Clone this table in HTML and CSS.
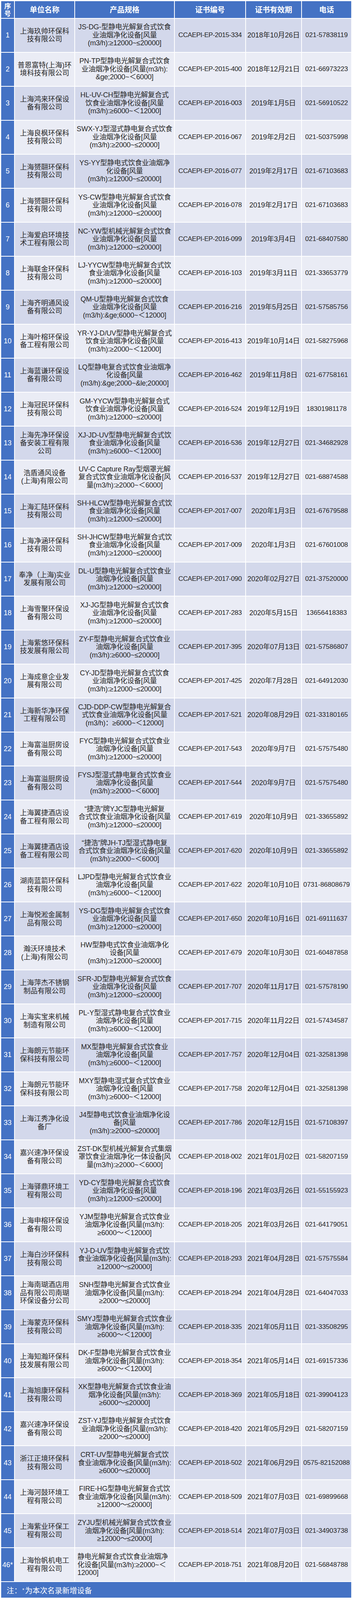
FILE: index.html
```html
<!DOCTYPE html>
<html lang="zh-CN">
<head>
<meta charset="utf-8">
<title>饮食业油烟净化设备名录</title>
<link rel="stylesheet" href="styles.css">
</head>
<body>
<div class="sheet">
<div class="row head"><div class="cell no">序<br>号</div><div class="cell">单位名称</div><div class="cell">产品规格</div><div class="cell">证书编号</div><div class="cell">证书有效期</div><div class="cell">电话</div></div>
<div class="row"><div class="cell no">1</div><div class="cell">上海玖帅环保科<br>技有限公司</div><div class="cell prod">JS-DG-型静电光解复合式饮食<br>业油烟净化设备[风量<br>(m3/h):≥12000~≤20000]</div><div class="cell cert">CCAEPI-EP-2015-334</div><div class="cell date">2018年10月26日</div><div class="cell tel">021-57838119</div></div>
<div class="row"><div class="cell no">2</div><div class="cell">普恩富特(上海)环<br>境科技有限公司</div><div class="cell prod">PN-TP型静电光解复合式饮食<br>业油烟净化设备[风量(m3/h):<br>&amp;ge;2000~＜6000]</div><div class="cell cert">CCAEPI-EP-2015-400</div><div class="cell date">2018年12月21日</div><div class="cell tel">021-66973223</div></div>
<div class="row"><div class="cell no">3</div><div class="cell">上海鸿来环保设<br>备有限公司</div><div class="cell prod">HL-UV-CH型静电光解复合式<br>饮食业油烟净化设备[风量<br>(m3/h):≥6000~＜12000]</div><div class="cell cert">CCAEPI-EP-2016-003</div><div class="cell date">2019年1月5日</div><div class="cell tel">021-56910522</div></div>
<div class="row"><div class="cell no">4</div><div class="cell">上海良枫环保科<br>技有限公司</div><div class="cell prod">SWX-YJ型湿式静电复合式饮食<br>业油烟净化设备[风量<br>(m3/h):≥2000~≤20000]</div><div class="cell cert">CCAEPI-EP-2016-067</div><div class="cell date">2019年2月2日</div><div class="cell tel">021-50375998</div></div>
<div class="row"><div class="cell no">5</div><div class="cell">上海赟翮环保科<br>技有限公司</div><div class="cell prod">YS-YY型静电式饮食业油烟净<br>化设备[风量<br>(m3/h):≥12000~≤20000]</div><div class="cell cert">CCAEPI-EP-2016-077</div><div class="cell date">2019年2月17日</div><div class="cell tel">021-67103683</div></div>
<div class="row"><div class="cell no">6</div><div class="cell">上海赟翮环保科<br>技有限公司</div><div class="cell prod">YS-CW型静电光解复合式饮食<br>业油烟净化设备[风量<br>(m3/h):≥12000~≤20000]</div><div class="cell cert">CCAEPI-EP-2016-078</div><div class="cell date">2019年2月17日</div><div class="cell tel">021-67103683</div></div>
<div class="row"><div class="cell no">7</div><div class="cell">上海爱启环境技<br>术工程有限公司</div><div class="cell prod">NC-YW型机械光解复合式饮食<br>业油烟净化设备[风量<br>(m3/h):≥12000~≤20000]</div><div class="cell cert">CCAEPI-EP-2016-099</div><div class="cell date">2019年3月4日</div><div class="cell tel">021-68407580</div></div>
<div class="row"><div class="cell no">8</div><div class="cell">上海联金环保科<br>技有限公司</div><div class="cell prod">LJ-YYCW型静电光解复合式饮<br>食业油烟净化设备[风量<br>(m3/h):≥12000~≤20000]</div><div class="cell cert">CCAEPI-EP-2016-103</div><div class="cell date">2019年3月11日</div><div class="cell tel">021-33653779</div></div>
<div class="row"><div class="cell no">9</div><div class="cell">上海齐明通风设<br>备有限公司</div><div class="cell prod">QM-U型静电光解复合式饮食<br>业油烟净化设备[风量<br>(m3/h):&amp;ge;6000~＜12000]</div><div class="cell cert">CCAEPI-EP-2016-216</div><div class="cell date">2019年5月25日</div><div class="cell tel">021-57585756</div></div>
<div class="row"><div class="cell no">10</div><div class="cell">上海叶榕环保设<br>备工程有限公司</div><div class="cell prod">YR-YJ-D/UV型静电光解复合式<br>饮食业油烟净化设备[风量<br>(m3/h):≥2000~＜12000]</div><div class="cell cert">CCAEPI-EP-2016-413</div><div class="cell date">2019年10月14日</div><div class="cell tel">021-58275968</div></div>
<div class="row"><div class="cell no">11</div><div class="cell">上海蓝谦环保设<br>备有限公司</div><div class="cell prod">LQ型静电复合式饮食业油烟净<br>化设备[风量<br>(m3/h):&amp;ge;2000~&amp;le;20000]</div><div class="cell cert">CCAEPI-EP-2016-462</div><div class="cell date">2019年11月8日</div><div class="cell tel">021-67758161</div></div>
<div class="row"><div class="cell no">12</div><div class="cell">上海冠民环保科<br>技有限公司</div><div class="cell prod">GM-YYCW型静电光解复合式<br>饮食业油烟净化设备[风量<br>(m3/h):≥12000~≤20000]</div><div class="cell cert">CCAEPI-EP-2016-524</div><div class="cell date">2019年12月19日</div><div class="cell tel">18301981178</div></div>
<div class="row"><div class="cell no">13</div><div class="cell">上海先净环保设<br>备安装工程有限<br>公司</div><div class="cell prod">XJ-JD-UV型静电光解复合式饮<br>食业油烟净化设备[风量<br>(m3/h):≥6000~＜12000]</div><div class="cell cert">CCAEPI-EP-2016-536</div><div class="cell date">2019年12月27日</div><div class="cell tel">021-34682928</div></div>
<div class="row"><div class="cell no">14</div><div class="cell">浩盾通风设备<br>(上海)有限公司</div><div class="cell prod">UV-C Capture Ray型烟罩光解<br>复合式饮食业油烟净化设备[风<br>量(m3/h):≥2000~＜6000]</div><div class="cell cert">CCAEPI-EP-2016-537</div><div class="cell date">2019年12月27日</div><div class="cell tel">021-68874588</div></div>
<div class="row"><div class="cell no">15</div><div class="cell">上海汇陆环保科<br>技有限公司</div><div class="cell prod">SH-HLCW型静电光解复合式饮<br>食业油烟净化设备[风量<br>(m3/h):≥12000~≤20000]</div><div class="cell cert">CCAEPI-EP-2017-007</div><div class="cell date">2020年1月3日</div><div class="cell tel">021-67679588</div></div>
<div class="row"><div class="cell no">16</div><div class="cell">上海净涵环保科<br>技有限公司</div><div class="cell prod">SH-JHCW型静电光解复合式饮<br>食业油烟净化设备[风量<br>(m3/h):≥12000~≤20000]</div><div class="cell cert">CCAEPI-EP-2017-009</div><div class="cell date">2020年1月3日</div><div class="cell tel">021-67601008</div></div>
<div class="row"><div class="cell no">17</div><div class="cell">奉净（上海)实业<br>发展有限公司</div><div class="cell prod">DL-U型静电光解复合式饮食业<br>油烟净化设备[风量<br>(m3/h):≥12000~≤20000]</div><div class="cell cert">CCAEPI-EP-2017-090</div><div class="cell date">2020年02月27日</div><div class="cell tel">021-37520000</div></div>
<div class="row"><div class="cell no">18</div><div class="cell">上海雪聚环保设<br>备有限公司</div><div class="cell prod">XJ-JG型静电光解复合式饮食<br>业油烟净化设备[风量<br>(m3/h):≥12000~≤20000]</div><div class="cell cert">CCAEPI-EP-2017-283</div><div class="cell date">2020年5月15日</div><div class="cell tel">13656418383</div></div>
<div class="row"><div class="cell no">19</div><div class="cell">上海紫悠环保科<br>技发展有限公司</div><div class="cell prod">ZY-F型静电光解复合式饮食业<br>油烟净化设备[风量<br>(m3/h):≥6000~≤20000]</div><div class="cell cert">CCAEPI-EP-2017-395</div><div class="cell date">2020年07月13日</div><div class="cell tel">021-57586807</div></div>
<div class="row"><div class="cell no">20</div><div class="cell">上海成意企业发<br>展有限公司</div><div class="cell prod">CY-JD型静电光解复合式饮食<br>业油烟净化设备[风量<br>(m3/h):≥12000~≤20000]</div><div class="cell cert">CCAEPI-EP-2017-425</div><div class="cell date">2020年7月28日</div><div class="cell tel">021-64912030</div></div>
<div class="row"><div class="cell no">21</div><div class="cell">上海新华净环保<br>工程有限公司</div><div class="cell prod">CJD-DDP-CW型静电光解复合<br>式饮食业油烟净化设备[风量<br>(m3/h)：≥6000~＜12000]</div><div class="cell cert">CCAEPI-EP-2017-521</div><div class="cell date">2020年08月29日</div><div class="cell tel">021-33180165</div></div>
<div class="row"><div class="cell no">22</div><div class="cell">上海富溢厨房设<br>备有限公司</div><div class="cell prod">FYC型静电光解复合式饮食业<br>油烟净化设备[风量<br>(m3/h):≥12000~≤20000]</div><div class="cell cert">CCAEPI-EP-2017-543</div><div class="cell date">2020年9月7日</div><div class="cell tel">021-57575480</div></div>
<div class="row"><div class="cell no">23</div><div class="cell">上海富溢厨房设<br>备有限公司</div><div class="cell prod">FYSJ型湿式静电复合式饮食业<br>油烟净化设备[风量<br>(m3/h):≥2000~＜6000]</div><div class="cell cert">CCAEPI-EP-2017-544</div><div class="cell date">2020年9月7日</div><div class="cell tel">021-57575480</div></div>
<div class="row"><div class="cell no">24</div><div class="cell">上海翼捷酒店设<br>备工程有限公司</div><div class="cell prod">“捷浩”牌YJC型静电光解复<br>合式饮食业油烟净化设备[风量<br>(m3/h):≥12000~≤20000]</div><div class="cell cert">CCAEPI-EP-2017-619</div><div class="cell date">2020年10月9日</div><div class="cell tel">021-33655892</div></div>
<div class="row"><div class="cell no">25</div><div class="cell">上海翼捷酒店设<br>备工程有限公司</div><div class="cell prod">“捷浩”牌JH-TJ型湿式静电复<br>合式饮食业油烟净化设备[风量<br>(m3/h):≥2000~＜6000]</div><div class="cell cert">CCAEPI-EP-2017-620</div><div class="cell date">2020年10月9日</div><div class="cell tel">021-33655892</div></div>
<div class="row"><div class="cell no">26</div><div class="cell">湖南蓝箭环保科<br>技有限公司</div><div class="cell prod">LJPD型静电光解复合式饮食业<br>油烟净化设备[风量<br>(m3/h):≥6000~＜12000]</div><div class="cell cert">CCAEPI-EP-2017-622</div><div class="cell date">2020年10月10日</div><div class="cell tel">0731-86808679</div></div>
<div class="row"><div class="cell no">27</div><div class="cell">上海悦淞金属制<br>品有限公司</div><div class="cell prod">YS-DG型静电光解复合式饮食<br>业油烟净化设备[风量<br>(m3/h):≥12000~≤20000]</div><div class="cell cert">CCAEPI-EP-2017-650</div><div class="cell date">2020年10月16日</div><div class="cell tel">021-69111637</div></div>
<div class="row"><div class="cell no">28</div><div class="cell">瀚沃环境技术<br>(上海)有限公司</div><div class="cell prod">HW型静电式饮食业油烟净化<br>设备[风量<br>(m3/h):≥12000~≤20000]</div><div class="cell cert">CCAEPI-EP-2017-679</div><div class="cell date">2020年10月30日</div><div class="cell tel">021-60487858</div></div>
<div class="row"><div class="cell no">29</div><div class="cell">上海萍杰不锈钢<br>制品有限公司</div><div class="cell prod">SFR-JD型静电光解复合式饮食<br>业油烟净化设备[风量<br>(m3/h):≥12000~≤20000]</div><div class="cell cert">CCAEPI-EP-2017-707</div><div class="cell date">2020年11月17日</div><div class="cell tel">021-57578190</div></div>
<div class="row"><div class="cell no">30</div><div class="cell">上海实宝来机械<br>制造有限公司</div><div class="cell prod">PL-Y型湿式静电复合式饮食业<br>油烟净化设备[风量<br>(m3/h):≥6000~＜12000]</div><div class="cell cert">CCAEPI-EP-2017-715</div><div class="cell date">2020年11月22日</div><div class="cell tel">021-57434587</div></div>
<div class="row"><div class="cell no">31</div><div class="cell">上海朗元节能环<br>保科技有限公司</div><div class="cell prod">MX型静电光解复合式饮食业<br>油烟净化设备[风量<br>(m3/h):≥6000~＜12000]</div><div class="cell cert">CCAEPI-EP-2017-757</div><div class="cell date">2020年12月04日</div><div class="cell tel">021-32581398</div></div>
<div class="row"><div class="cell no">32</div><div class="cell">上海朗元节能环<br>保科技有限公司</div><div class="cell prod">MXY型静电湿式复合式饮食业<br>油烟净化设备[风量<br>(m3/h):≥6000~＜12000]</div><div class="cell cert">CCAEPI-EP-2017-758</div><div class="cell date">2020年12月04日</div><div class="cell tel">021-32581398</div></div>
<div class="row"><div class="cell no">33</div><div class="cell">上海江秀净化设<br>备厂</div><div class="cell prod">J4型静电式饮食业油烟净化设<br>备[风量<br>(m3/h):≥2000~≤20000]</div><div class="cell cert">CCAEPI-EP-2017-786</div><div class="cell date">2020年12月15日</div><div class="cell tel">021-57108397</div></div>
<div class="row"><div class="cell no">34</div><div class="cell">嘉兴速净环保设<br>备有限公司</div><div class="cell prod">ZST-DK型机械光解复合式集烟<br>罩饮食业油烟净化一体设备[风<br>量(m3/h):≥2000~＜6000]</div><div class="cell cert">CCAEPI-EP-2018-002</div><div class="cell date">2021年01月02日</div><div class="cell tel">021-58207159</div></div>
<div class="row"><div class="cell no">35</div><div class="cell">上海驿鼎环境工<br>程有限公司</div><div class="cell prod">YD-CY型静电光解复合式饮食<br>业油烟净化设备[风量<br>(m3/h):≥12000~≤20000]</div><div class="cell cert">CCAEPI-EP-2018-196</div><div class="cell date">2021年03月26日</div><div class="cell tel">021-55155923</div></div>
<div class="row"><div class="cell no">36</div><div class="cell">上海申榕环保设<br>备有限公司</div><div class="cell prod">YJM型静电光解复合式饮食业<br>油烟净化设备[风量(m3/h):<br>≥6000～＜12000]</div><div class="cell cert">CCAEPI-EP-2018-205</div><div class="cell date">2021年03月26日</div><div class="cell tel">021-64179051</div></div>
<div class="row"><div class="cell no">37</div><div class="cell">上海白沙环保科<br>技有限公司</div><div class="cell prod">YJ-D-UV型静电光解复合式饮<br>食业油烟净化设备[风量(m3/h):<br>≥12000～≤20000]</div><div class="cell cert">CCAEPI-EP-2018-293</div><div class="cell date">2021年04月28日</div><div class="cell tel">021-57575584</div></div>
<div class="row"><div class="cell no">38</div><div class="cell">上海南瑚酒店用<br>品有限公司南瑚<br>环保设备分公司</div><div class="cell prod">SNH型静电光解复合式饮食业<br>油烟净化设备[风量(m3/h):<br>≥2000～≤20000]</div><div class="cell cert">CCAEPI-EP-2018-294</div><div class="cell date">2021年04月28日</div><div class="cell tel">021-64047033</div></div>
<div class="row"><div class="cell no">39</div><div class="cell">上海蒙克环保科<br>技有限公司</div><div class="cell prod">SMYJ型静电光解复合式饮食业<br>油烟净化设备[风量(m3/h):<br>≥6000～＜12000]</div><div class="cell cert">CCAEPI-EP-2018-335</div><div class="cell date">2021年05月11日</div><div class="cell tel">021-33508295</div></div>
<div class="row"><div class="cell no">40</div><div class="cell">上海知瀚环保科<br>技发展有限公司</div><div class="cell prod">DK-F型静电光解复合式饮食业<br>油烟净化设备[风量(m3/h):<br>≥6000～＜12000]</div><div class="cell cert">CCAEPI-EP-2018-354</div><div class="cell date">2021年05月14日</div><div class="cell tel">021-69157336</div></div>
<div class="row"><div class="cell no">41</div><div class="cell">上海旭康环保科<br>技有限公司</div><div class="cell prod">XK型静电光解复合式饮食业油<br>烟净化设备[风量(m3/h):<br>≥6000～≤20000]</div><div class="cell cert">CCAEPI-EP-2018-369</div><div class="cell date">2021年05月18日</div><div class="cell tel">021-39904123</div></div>
<div class="row"><div class="cell no">42</div><div class="cell">嘉兴速净环保设<br>备有限公司</div><div class="cell prod">ZST-YJ型静电光解复合式饮食<br>业油烟净化设备[风量(m3/h):<br>≥2000～≤20000]</div><div class="cell cert">CCAEPI-EP-2018-420</div><div class="cell date">2021年05月29日</div><div class="cell tel">021-58207159</div></div>
<div class="row"><div class="cell no">43</div><div class="cell">浙江正境环保科<br>技有限公司</div><div class="cell prod">CRT-UV型静电光解复合式饮<br>食业油烟净化设备[风量(m3/h):<br>≥6000～≤20000]</div><div class="cell cert">CCAEPI-EP-2018-502</div><div class="cell date">2021年06月29日</div><div class="cell tel">0575-82152088</div></div>
<div class="row"><div class="cell no">44</div><div class="cell">上海河鼓环境工<br>程有限公司</div><div class="cell prod">FIRE-HG型静电光解复合式饮<br>食业油烟净化设备[风量(m3/h):<br>≥12000～≤20000]</div><div class="cell cert">CCAEPI-EP-2018-509</div><div class="cell date">2021年07月03日</div><div class="cell tel">021-69899668</div></div>
<div class="row"><div class="cell no">45</div><div class="cell">上海紫业环保工<br>程有限公司</div><div class="cell prod">ZYJU型机械光解复合式饮食业<br>油烟净化设备[风量(m3/h):<br>≥12000～≤20000]</div><div class="cell cert">CCAEPI-EP-2018-514</div><div class="cell date">2021年07月03日</div><div class="cell tel">021-34903738</div></div>
<div class="row"><div class="cell no">46*</div><div class="cell">上海怡帆机电工<br>程有限公司</div><div class="cell prod left">静电光解复合式饮食业油烟净<br>化设备[风量(m3/h):≥2000~＜<br>12000]</div><div class="cell cert">CCAEPI-EP-2018-751</div><div class="cell date">2021年08月20日</div><div class="cell tel">021-56848788</div></div>
<div class="note">注：<span class="star">*</span> 为本次名录新增设备</div>
</div>
</body>
</html>
```

FILE: styles.css
```css
:root {
  /* one unit of the 4298px-tall design, fitted to the visible window height */
  --u: calc(100vh / 4298);
}

html {
  margin: 0;
  padding: 0;
  overflow: hidden;
  background: #ffffff;
}

body {
  margin: 0;
  padding: 0;
  font-family: "Liberation Sans", "Noto Sans CJK SC", sans-serif;
  color: #262626;
}

.sheet {
  display: flex;
  flex-direction: column;
  gap: calc(2 * var(--u));
  padding: calc(3 * var(--u)) 2px 0 3px;
  width: 895px;
}

.row {
  display: grid;
  grid-template-columns: 33px 152px 253px 180px 141px 126px;
  column-gap: 2px;
  height: calc(89.33 * var(--u));
}

.row:nth-child(even) .cell {
  background: #d3d8eb;
}

.row:nth-child(odd) .cell {
  background: #eaecf5;
}

.cell {
  display: flex;
  align-items: center;
  justify-content: center;
  text-align: center;
  font-size: 18px;
  line-height: 20.5px;
  white-space: nowrap;
  min-width: 0;
}

.row .cell.no {
  background: #4472c4;
  color: #ffffff;
}

.prod {
  letter-spacing: -0.2px;
}

.prod.left {
  justify-content: flex-start;
  text-align: left;
  padding-left: 6px;
}

.cert {
  font-size: 17px;
  letter-spacing: -0.4px;
}

.tel {
  font-size: 17px;
}

.row.head {
  height: calc(45 * var(--u));
}

.row.head .cell {
  background: #4472c4;
  color: #ffffff;
  font-family: "Noto Sans CJK SC", sans-serif;
  font-weight: 700;
  font-size: 19px;
  line-height: 20px;
}

.row.head .cell.no {
  font-size: 17px;
  line-height: 19px;
}

.note {
  height: calc(42 * var(--u));
  background: #4472c4;
  color: #ffffff;
  display: flex;
  align-items: center;
  padding-left: 14px;
  font-size: 19px;
}

.star {
  font-size: 13px;
  margin: 0 2px;
}
```
